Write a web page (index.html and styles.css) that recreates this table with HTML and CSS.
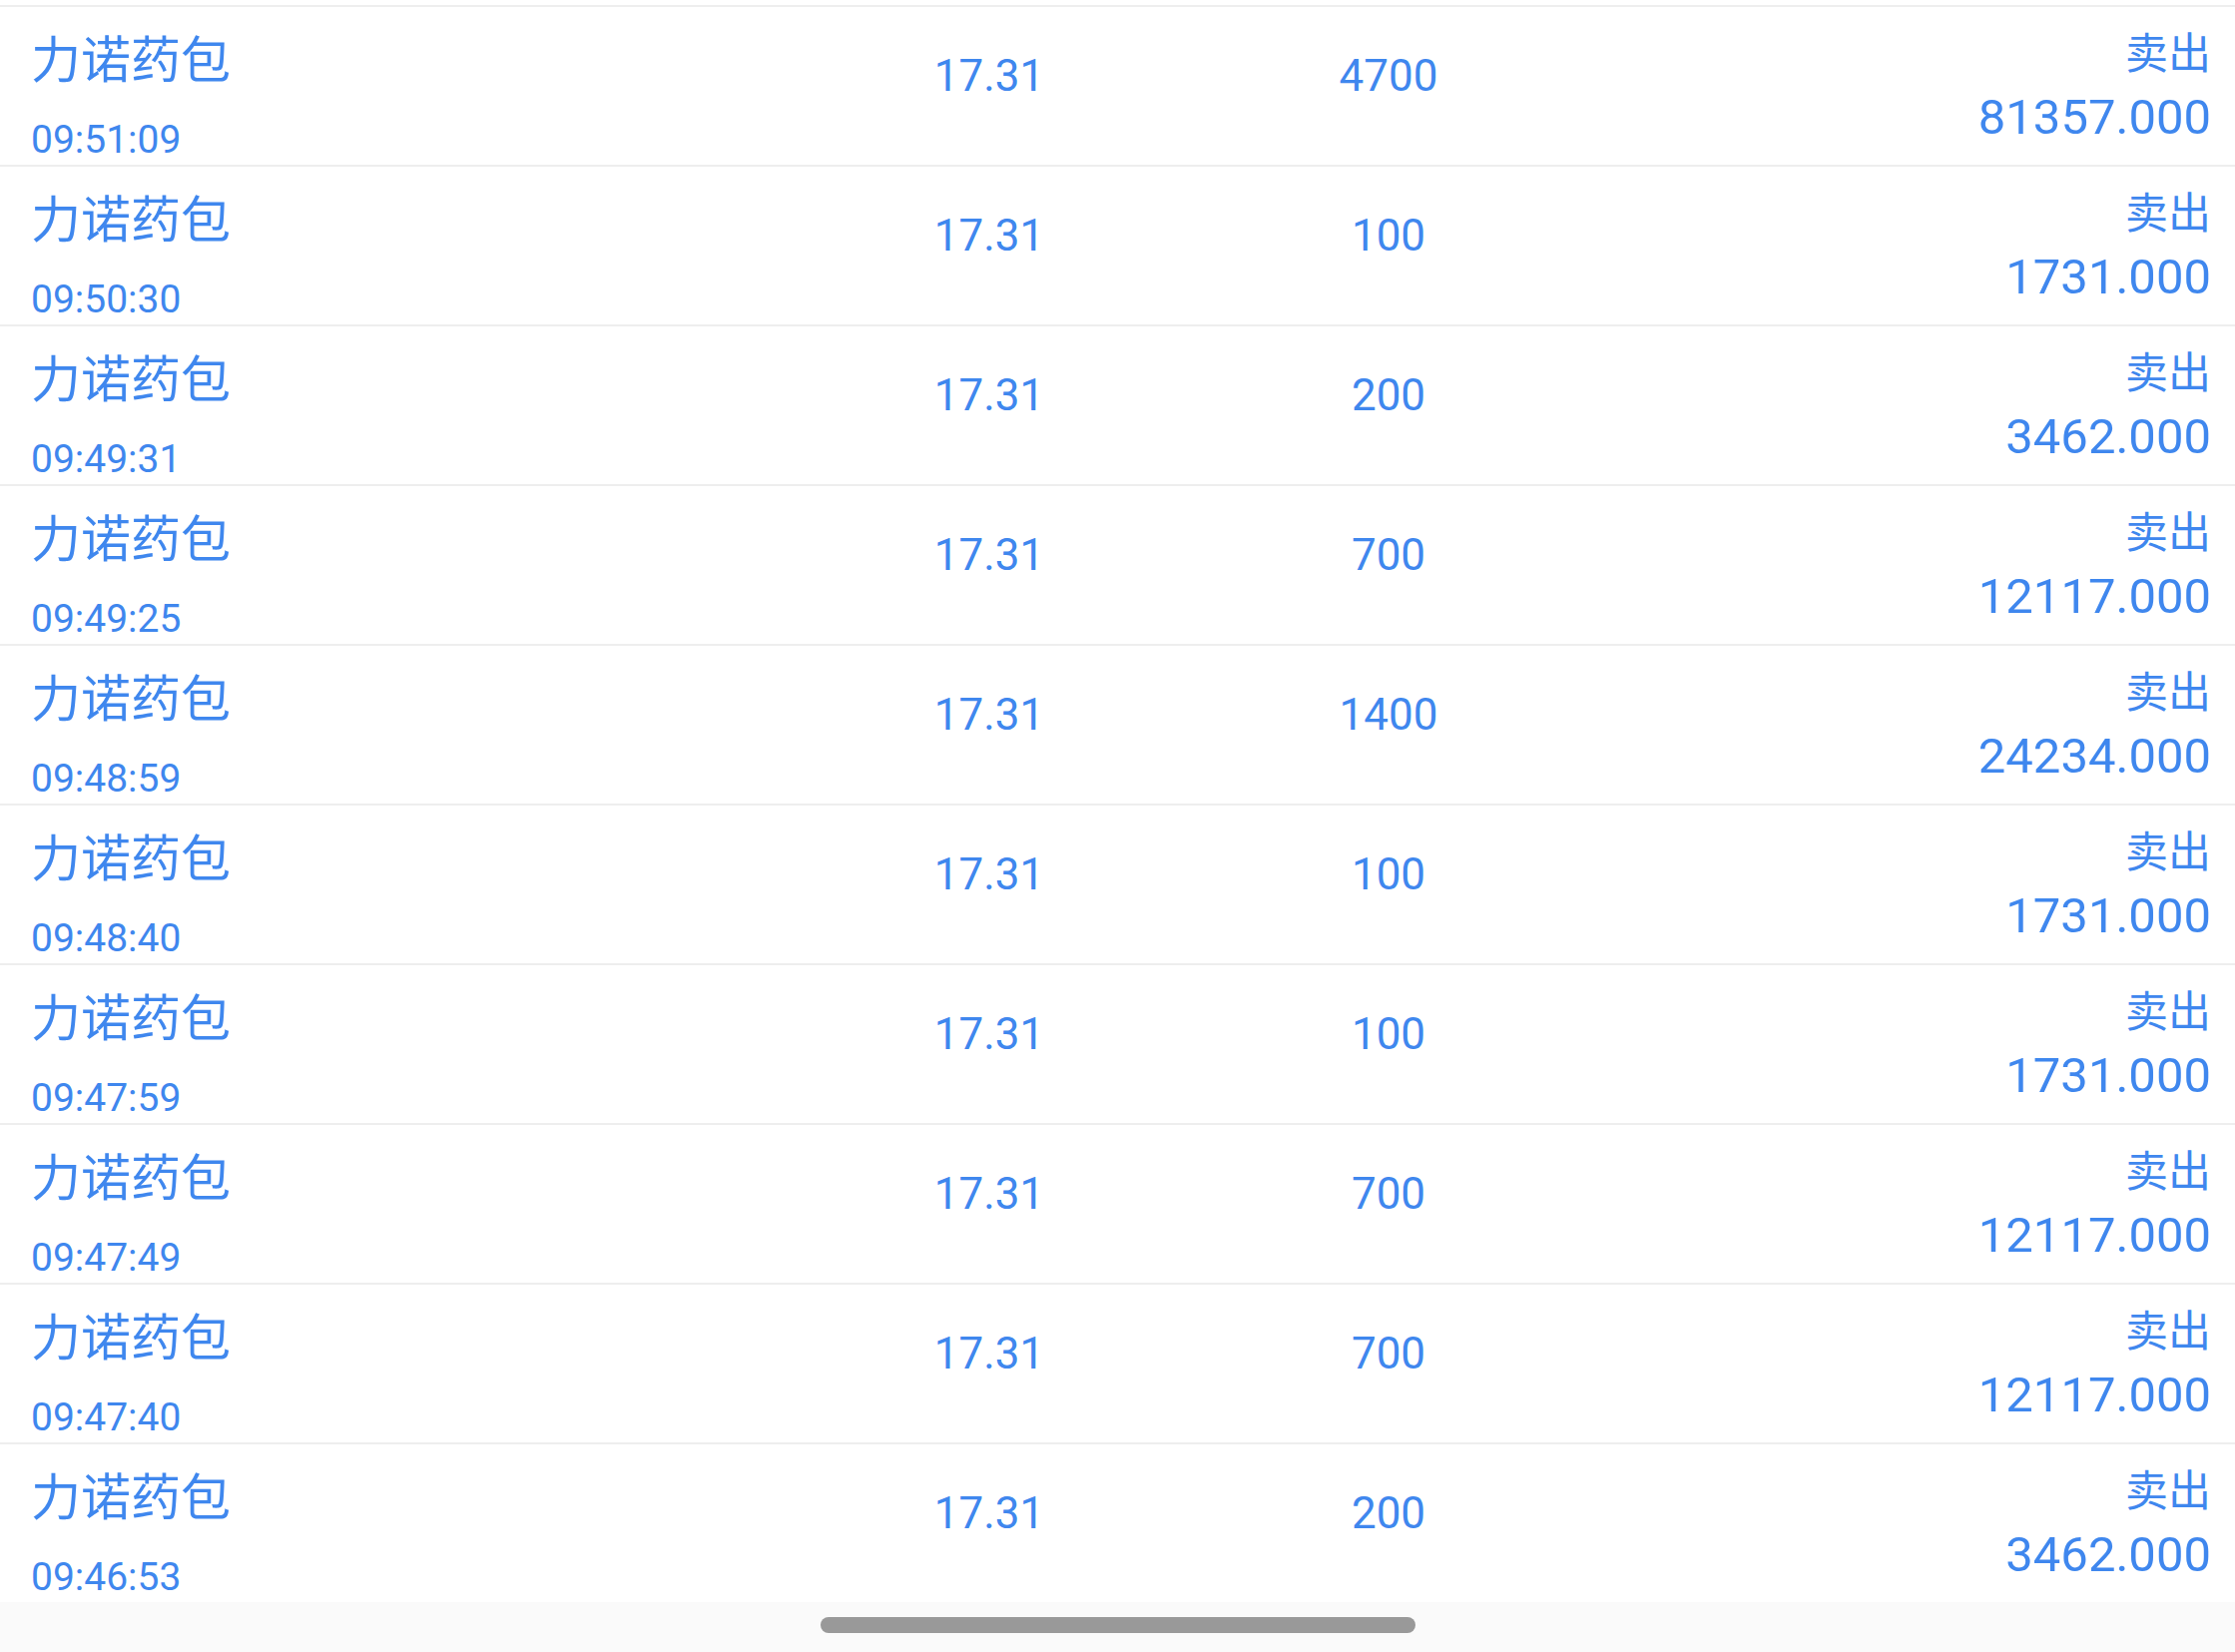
FILE: index.html
```html
<!DOCTYPE html>
<html lang="zh-CN">
<head>
<meta charset="utf-8">
<title>成交明细</title>
<link rel="stylesheet" href="styles.css">
</head>
<body>
<div class="page">
  <div class="list">
    <div class="row">
      <div class="c-name"><div class="name">力诺药包</div><div class="time">09:51:09</div></div>
      <div class="c-price">17.31</div>
      <div class="c-qty">4700</div>
      <div class="c-amt"><div class="side">卖出</div><div class="amt">81357.000</div></div>
    </div>
    <div class="row">
      <div class="c-name"><div class="name">力诺药包</div><div class="time">09:50:30</div></div>
      <div class="c-price">17.31</div>
      <div class="c-qty">100</div>
      <div class="c-amt"><div class="side">卖出</div><div class="amt">1731.000</div></div>
    </div>
    <div class="row">
      <div class="c-name"><div class="name">力诺药包</div><div class="time">09:49:31</div></div>
      <div class="c-price">17.31</div>
      <div class="c-qty">200</div>
      <div class="c-amt"><div class="side">卖出</div><div class="amt">3462.000</div></div>
    </div>
    <div class="row">
      <div class="c-name"><div class="name">力诺药包</div><div class="time">09:49:25</div></div>
      <div class="c-price">17.31</div>
      <div class="c-qty">700</div>
      <div class="c-amt"><div class="side">卖出</div><div class="amt">12117.000</div></div>
    </div>
    <div class="row">
      <div class="c-name"><div class="name">力诺药包</div><div class="time">09:48:59</div></div>
      <div class="c-price">17.31</div>
      <div class="c-qty">1400</div>
      <div class="c-amt"><div class="side">卖出</div><div class="amt">24234.000</div></div>
    </div>
    <div class="row">
      <div class="c-name"><div class="name">力诺药包</div><div class="time">09:48:40</div></div>
      <div class="c-price">17.31</div>
      <div class="c-qty">100</div>
      <div class="c-amt"><div class="side">卖出</div><div class="amt">1731.000</div></div>
    </div>
    <div class="row">
      <div class="c-name"><div class="name">力诺药包</div><div class="time">09:47:59</div></div>
      <div class="c-price">17.31</div>
      <div class="c-qty">100</div>
      <div class="c-amt"><div class="side">卖出</div><div class="amt">1731.000</div></div>
    </div>
    <div class="row">
      <div class="c-name"><div class="name">力诺药包</div><div class="time">09:47:49</div></div>
      <div class="c-price">17.31</div>
      <div class="c-qty">700</div>
      <div class="c-amt"><div class="side">卖出</div><div class="amt">12117.000</div></div>
    </div>
    <div class="row">
      <div class="c-name"><div class="name">力诺药包</div><div class="time">09:47:40</div></div>
      <div class="c-price">17.31</div>
      <div class="c-qty">700</div>
      <div class="c-amt"><div class="side">卖出</div><div class="amt">12117.000</div></div>
    </div>
    <div class="row">
      <div class="c-name"><div class="name">力诺药包</div><div class="time">09:46:53</div></div>
      <div class="c-price">17.31</div>
      <div class="c-qty">200</div>
      <div class="c-amt"><div class="side">卖出</div><div class="amt">3462.000</div></div>
    </div>
  </div>
  <div class="navbar"><div class="handle"></div></div>
</div>
</body>
</html>
```

FILE: styles.css
```css
* {
  box-sizing: content-box;
}

html, body {
  margin: 0;
  padding: 0;
  background: #ffffff;
}

body {
  font-family: Roboto, "Noto Sans CJK SC", sans-serif;
  color: #3f87ee;
}

.page {
  width: 2239px;
  height: 1655px;
  display: flex;
  flex-direction: column;
  overflow: hidden;
}

.list {
  padding-top: 5px;
  flex: 1;
}

.row {
  display: grid;
  grid-template-columns: 760px 400px 400px 1fr;
  height: 158px;
  border-top: 2px solid #eeeeee;
  padding: 0 24px 0 31px;
}

.name {
  margin-top: 24px;
  font-family: "Noto Sans CJK SC", sans-serif;
  font-size: 50px;
  line-height: 50px;
}

.time {
  margin-top: 40px;
  font-size: 39px;
  line-height: 39px;
}

.c-price,
.c-qty {
  padding-top: 47px;
  font-size: 44px;
  line-height: 44px;
  text-align: center;
}

.c-amt {
  text-align: right;
}

.side {
  margin-top: 22px;
  font-family: "Noto Sans CJK SC", sans-serif;
  font-size: 43px;
  line-height: 43px;
}

.amt {
  margin-top: 21px;
  font-size: 49px;
  line-height: 49px;
}

.navbar {
  height: 50px;
  background: #fafafa;
  display: flex;
  justify-content: center;
  padding-top: 15px;
  box-sizing: border-box;
}

.handle {
  width: 596px;
  height: 16px;
  border-radius: 8px;
  background: #999999;
}
```
